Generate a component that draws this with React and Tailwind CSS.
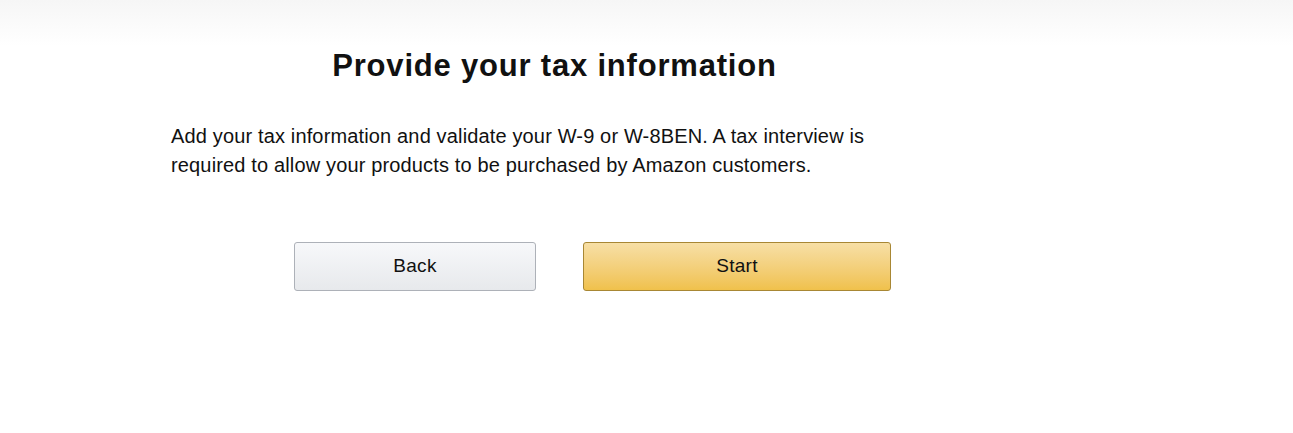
export default function App() {
  return (
    <div className="min-h-[433px] w-[1293px] bg-gradient-to-b from-[#f6f6f6] to-white to-[46px] bg-no-repeat font-['Liberation_Sans',Arial,sans-serif] text-[#111]">
      <div className="ml-[171px] w-[767px] pt-[46px]">
        <h1 className="text-center text-[31px] font-bold leading-[40px] tracking-[0.8px]">Provide your tax information</h1>
        <p className="mt-[36px] w-[720px] text-[20px] leading-[29px] tracking-[0.15px] text-[#111]">
          Add your tax information and validate your W-9 or W-8BEN. A tax interview is required to allow your products to be purchased by Amazon customers.
        </p>
        <div className="mt-[62px] flex gap-[47px] pl-[123px]">
          <button className="h-[49px] w-[242px] rounded-[3px] border border-[#adb1b8] bg-gradient-to-b from-[#f7f8fa] to-[#e7e9ec] text-[19px] tracking-[0.3px] text-[#111]">
            Back
          </button>
          <button className="h-[49px] w-[308px] rounded-[3px] border border-[#a88734] bg-gradient-to-b from-[#f7dfa5] to-[#f0c14b] text-[19px] tracking-[0.3px] text-[#111]">
            Start
          </button>
        </div>
      </div>
    </div>
  );
}
